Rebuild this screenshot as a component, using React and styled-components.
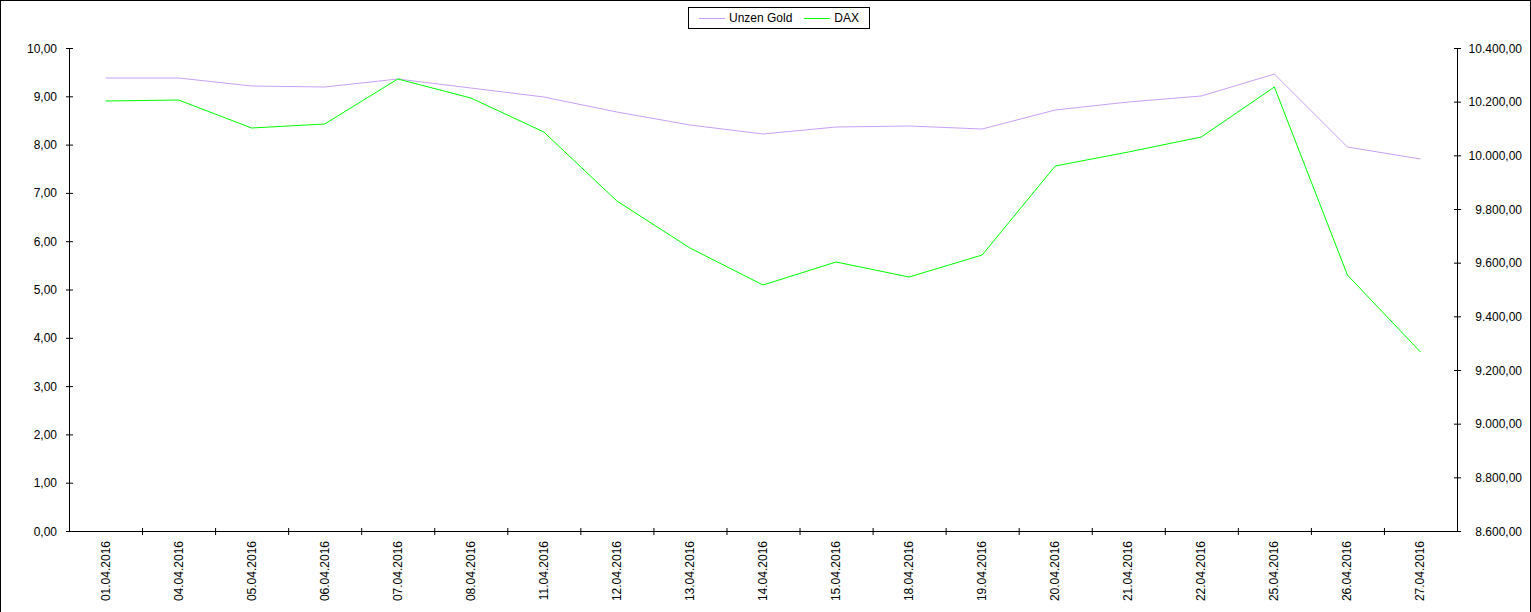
import React from "react";
import styled, { createGlobalStyle } from "styled-components";

const Global = createGlobalStyle`
  body { margin: 0; background: #fff; font-family: "Liberation Sans", Arial, sans-serif; }
`;
const Frame = styled.div`
  position: relative;
  width: 1529px;
  height: 612px;
  border: 1px solid #000;
  border-bottom: none;
  background: #fff;
  overflow: hidden;
`;
const Legend = styled.div`
  position: absolute;
  left: 687px;
  top: 6px;
  width: 180px;
  height: 20px;
  border: 1px solid #000;
  display: flex;
  align-items: center;
  justify-content: center;
  gap: 12px;
  font-size: 12px;
  background: #fff;
`;
const Item = styled.span`
  display: flex;
  align-items: center;
  gap: 4px;
`;
const Swatch = styled.span`
  width: 26px;
  height: 1px;
  background: ${(p) => p.$c};
`;

const PURPLE = "#c8a0f8";
const GREEN = "#00ff00";
const dates = ["01","04","05","06","07","08","11","12","13","14","15","18","19","20","21","22","25","26","27"].map((d) => `${d}.04.2016`);
const gold = [77,77,85,86,78,87,96,111,124,133,126,125,128,109,101,95,73,146,158];
const dax = [100,99,127,123,78,97,131,200,247,284,261,276,254,165,151,136,86,274,351];
const X0 = 68, X1 = 1456, Y0 = 47, Y1 = 530;
const step = (X1 - X0) / 19;
const cx = (i) => X0 + step * (i + 0.5);

export default function App() {
  const left = [...Array(11)].map((_, i) => i);
  const right = [...Array(10)].map((_, i) => 8600 + i * 200);
  const fmtR = (v) => v.toLocaleString("de-DE") + ",00";
  return (
    <Frame>
      <Global />
      <svg width="1529" height="612" style={{ display: "block" }} fontFamily="Liberation Sans, Arial, sans-serif" fontSize="12">
        <line x1={X0 + 0.5} y1={Y0} x2={X0 + 0.5} y2={Y1 + 0.5} stroke="#000" />
        <line x1={X1 + 0.5} y1={Y0} x2={X1 + 0.5} y2={Y1 + 0.5} stroke="#000" />
        <line x1={X0} y1={Y1 + 0.5} x2={X1 + 1} y2={Y1 + 0.5} stroke="#000" />
        {left.map((v) => {
          const y = Y1 - (v / 10) * (Y1 - Y0) + 0.5;
          return (
            <g key={v}>
              <line x1={X0 - 3} x2={X0 + 4} y1={y} y2={y} stroke="#000" />
              <text x={X0 - 12} y={y + 4} textAnchor="end">{v},00</text>
            </g>
          );
        })}
        {right.map((v, i) => {
          const y = Y1 - (i / 9) * (Y1 - Y0) + 0.5;
          return (
            <g key={v}>
              <line x1={X1 - 3} x2={X1 + 4} y1={y} y2={y} stroke="#000" />
              <text x={X1 + 65} y={y + 4} textAnchor="end">{fmtR(v)}</text>
            </g>
          );
        })}
        {dates.map((d, i) => (
          <g key={d}>
            {i > 0 && <line x1={X0 + step * i + 0.5} x2={X0 + step * i + 0.5} y1={Y1 - 3} y2={Y1 + 4} stroke="#000" />}
            <text transform={`translate(${cx(i) + 4},${Y1 + 10}) rotate(-90)`} textAnchor="end">{d}</text>
          </g>
        ))}
        <polyline fill="none" stroke={PURPLE} points={gold.map((y, i) => `${cx(i)},${y}`).join(" ")} />
        <polyline fill="none" stroke={GREEN} points={dax.map((y, i) => `${cx(i)},${y}`).join(" ")} />
      </svg>
      <Legend>
        <Item><Swatch $c={PURPLE} />Unzen Gold</Item>
        <Item><Swatch $c={GREEN} />DAX</Item>
      </Legend>
    </Frame>
  );
}
